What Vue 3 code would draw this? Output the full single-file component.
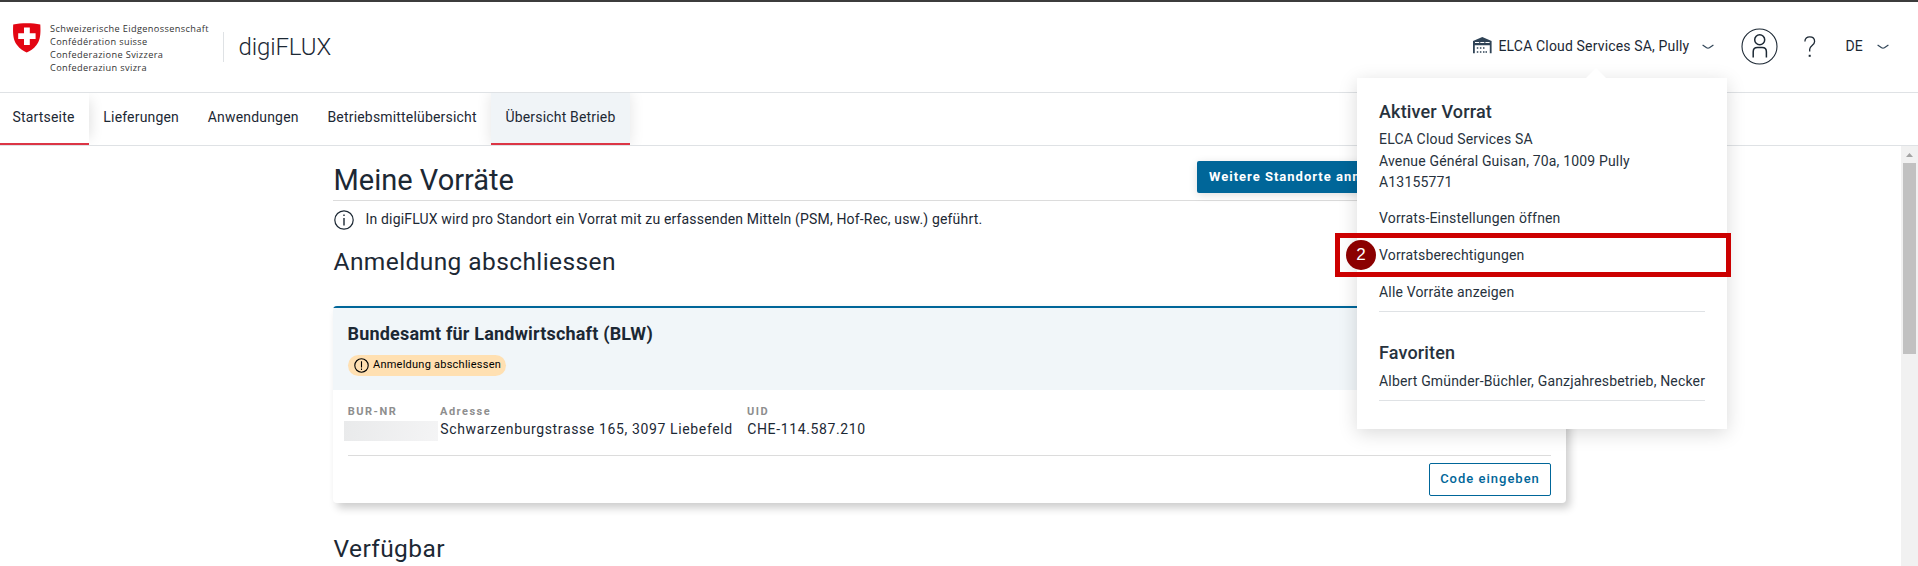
<script setup>
const confederation = [
  'Schweizerische Eidgenossenschaft',
  'Confédération suisse',
  'Confederazione Svizzera',
  'Confederaziun svizra',
]
const tabs = [
  { label: 'Startseite', cls: 'first' },
  { label: 'Lieferungen' },
  { label: 'Anwendungen' },
  { label: 'Betriebsmittelübersicht' },
  { label: 'Übersicht Betrieb', cls: 'current' },
]
</script>

<template>
  <div class="page">
    <header class="header">
      <svg class="shield" width="28" height="30" viewBox="0 0 28 30">
        <path d="M0.2 1.6C8 -0.3 19.500 -0.3 27.300 1.600C27.800 11 27.300 17 23.500 22C20.500 26 17 28 13.700 29.600C10.500 28 7 26 4 22C0.200 17 -0.300 11 0.200 1.600Z" fill="#e30613" />
        <path d="M11 4.500h5.800v5.800h5.800v5.700h-5.800v5.900h-5.800v-5.900h-5.800v-5.700h5.800z" fill="#fff" />
      </svg>
      <div class="conf">
        <div v-for="c in confederation" :key="c">{{ c }}</div>
      </div>
      <div class="brand">digiFLUX</div>
      <div class="account">
        <svg width="19" height="17" viewBox="0 0 19 17">
          <path d="M0 4L9.300 0L18.600 4V16.300H16.800V8.200H1.800V16.300H0Z" fill="#2f4356" />
          <path d="M2 5h4.200v1H2zM7.300 5h4v1h-4zM12.400 5h4.200v1h-4.200z" fill="#fff" />
          <path d="M3.800 10.200h1.500v1.500h-1.500zM6.900 10.200h1.500v1.500h-1.500zM10 10.200h1.500v1.500h-1.500zM3.800 14.200h1.500v1.500h-1.500zM6.900 14.200h1.500v1.500h-1.500zM10 14.200h1.500v1.500h-1.500zM12.500 14.200h1.500v1.500h-1.500z" fill="#2f4356" />
        </svg>
        <span class="acc-name">ELCA Cloud Services SA, Pully</span>
        <svg class="chev" width="12" height="6" viewBox="0 0 12 6"><path d="M0.600 1L4.600 3.700Q6 4.500 7.400 3.700L11.400 1" fill="none" stroke="#2f4356" stroke-width="1.200" /></svg>
      </div>
      <svg class="user" width="37" height="37" viewBox="0 0 37 37" fill="none" stroke="#1c2834">
        <circle cx="18.500" cy="18.500" r="17.500" stroke-width="1.100" />
        <circle cx="18.700" cy="11.700" r="5" stroke-width="1.500" />
        <path d="M12.200 29.500V23.700Q12.200 19.500 16.400 19.500H21.200Q25.400 19.500 25.400 23.700V29.500" stroke-width="1.500" />
      </svg>
      <svg class="help" width="12" height="22" viewBox="0 0 12 22">
        <path d="M0.900 5.500C0.900 2.500 3 0.900 5.700 0.900C8.500 0.900 10.600 2.700 10.600 5.400C10.600 9.300 5.700 9.500 5.700 13.200V15.500" fill="none" stroke="#1c2834" stroke-width="1.300" />
        <rect x="4.700" y="18.800" width="2" height="2" fill="#1c2834" />
      </svg>
      <span class="lang">DE</span>
      <svg class="chev2" width="12" height="6" viewBox="0 0 12 6"><path d="M0.600 1L4.600 3.700Q6 4.500 7.400 3.700L11.400 1" fill="none" stroke="#2f4356" stroke-width="1.200" /></svg>
    </header>

    <nav class="nav">
      <a v-for="t in tabs" :key="t.label" class="tab" :class="t.cls">{{ t.label }}</a>
    </nav>

    <div class="body">
      <main class="content">
        <div class="title-row">
          <h1>Meine Vorräte</h1>
          <button class="primary">Weitere Standorte anmelden</button>
        </div>
        <div class="info">
          <svg width="20" height="20" viewBox="0 0 20 20">
            <circle cx="10" cy="10" r="9.200" fill="none" stroke="#1c2834" stroke-width="1.200" />
            <path d="M10 8V15.500M10 4.500V6" stroke="#1c2834" stroke-width="1.400" />
          </svg>
          <span>In digiFLUX wird pro Standort ein Vorrat mit zu erfassenden Mitteln (PSM, Hof-Rec, usw.) geführt.</span>
        </div>
        <h2>Anmeldung abschliessen</h2>
        <section class="card">
          <div class="card-head">
            <h3>Bundesamt für Landwirtschaft (BLW)</h3>
            <div class="pill">
              <svg width="15" height="15" viewBox="0 0 15 15">
                <circle cx="7.500" cy="7.500" r="6.700" fill="none" stroke="#000" stroke-width="1.100" />
                <path d="M7.500 3.300V9.500M7.500 10.500V12" stroke="#000" stroke-width="1.100" />
              </svg>
              <span>Anmeldung abschliessen</span>
            </div>
          </div>
          <div class="fields">
            <div class="f1"><label>BUR-NR</label><div class="masked"></div></div>
            <div class="f2"><label>Adresse</label><p>Schwarzenburgstrasse 165, 3097 Liebefeld</p></div>
            <div><label>UID</label><p>CHE-114.587.210</p></div>
          </div>
          <div class="actions"><button class="outline">Code eingeben</button></div>
        </section>
        <h2 class="avail">Verfügbar</h2>
      </main>
      <div class="scrollbar">
        <svg width="17" height="17" viewBox="0 0 17 17"><path d="M5 11L8.500 7L12 11Z" fill="#a3a3a3" /></svg>
        <div class="thumb"></div>
      </div>
    </div>

    <aside class="menu">
      <h4>Aktiver Vorrat</h4>
      <address>ELCA Cloud Services SA<br />Avenue Général Guisan, 70a, 1009 Pully<br />A13155771</address>
      <a>Vorrats-Einstellungen öffnen</a>
      <a>Vorratsberechtigungen</a>
      <a>Alle Vorräte anzeigen</a>
      <hr />
      <h4 class="fav">Favoriten</h4>
      <a class="fav-item">Albert Gmünder-Büchler, Ganzjahresbetrieb, Necker</a>
    </aside>
    <div class="marker"><span>2</span></div>
  </div>
</template>

<style>
body { margin: 0; background: #fff; overflow: hidden; }
</style>

<style scoped>
* { box-sizing: border-box; }
.page { position: relative; width: 1918px; height: 566px; overflow: hidden; background: #fff; color: #1c2834; font: 14px/20px Roboto, sans-serif; display: flex; flex-direction: column; }
.header { height: 93px; flex: none; border-top: 2px solid #3c3c3c; border-bottom: 1px solid #dfe2e5; display: flex; align-items: flex-start; padding-left: 13px; }
.shield { margin-top: 21px; }
.conf { margin: 20px 0 0 9px; width: 173px; font: 9.200px/13px "Open Sans", sans-serif; letter-spacing: .37px; color: #333; white-space: nowrap; }
.brand { margin-top: 30px; height: 30px; border-left: 1px solid #dfe2e5; padding-left: 14.500px; font-size: 24px; line-height: 30px; font-weight: 300; letter-spacing: -.12px; }
.account { margin-left: auto; display: flex; }
.account > svg:first-child { margin-top: 35px; }
.acc-name { margin: 34px 0 0 6.500px; width: 203.500px; letter-spacing: .16px; white-space: nowrap; }
.account .chev { margin-top: 42px; }
.user { margin: 26px 0 0 26.500px; }
.help { margin: 34px 0 0 26px; }
.lang { margin: 34px 0 0 30px; width: 31px; }
.chev2 { margin: 42px 29.500px 0 0; }
.nav { height: 53px; flex: none; border-bottom: 1px solid #dfe2e5; display: flex; }
.tab { height: 52px; padding: 0 14.400px; line-height: 49px; white-space: nowrap; letter-spacing: .18px; }
.tab.first { padding-left: 12.500px; border-bottom: 2px solid #dc3545; box-shadow: 8px 0 14px -7px #0002; clip-path: inset(0 -20px 0 0); }
.tab.current { background: #f0f4f7; border-bottom: 2px solid #dc3545; box-shadow: 0 0 14px #0000001c; clip-path: inset(0 -20px 0 -20px); }
.body { flex: 1; min-height: 0; display: flex; justify-content: space-between; }
.content { width: 1233px; margin-left: 333px; }
.title-row { height: 55px; border-bottom: 1px solid #dcdcdc; display: flex; justify-content: space-between; }
h1, h2, h3, h4 { margin: 0; font-weight: 400; white-space: nowrap; }
h1 { font-size: 29px; line-height: 36px; margin-top: 16px; padding-left: .5px; }
button { font: 700 13px/20px Roboto, sans-serif; letter-spacing: 1px; border-radius: 2px; white-space: nowrap; }
.primary { width: 369px; height: 32px; margin-top: 15px; border: 0; background: #006699; color: #fff; padding: 0 12px; text-align: left; box-shadow: 0 2px 8px #0002; }
.info { display: flex; align-items: center; gap: 11.500px; height: 38px; padding-left: 1px; letter-spacing: .17px; white-space: nowrap; }
.info span { margin-top: -2px; }
h2 { font-size: 24.500px; line-height: 30px; margin-top: 8px; padding-left: .5px; letter-spacing: .41px; }
.card { margin-top: 29px; height: 197px; border-top: 2px solid #006699; border-radius: 4px; box-shadow: 4px 5px 8px #0003; background: #fff; }
.card-head { height: 82px; background: #f1f6f9; padding: 15px 14.500px 0; }
h3 { font-size: 18px; line-height: 22px; font-weight: 700; letter-spacing: .19px; }
.pill { margin-top: 10px; width: 158px; height: 21px; border-radius: 11px; background: #ffe0b2; color: #000; display: flex; align-items: center; gap: 4.500px; padding-left: 6px; font-size: 11px; letter-spacing: .24px; white-space: nowrap; }
.pill span { margin-top: -2px; }
.fields { display: flex; height: 66px; margin: 0 15px; padding-top: 14px; border-bottom: 1px solid #dcdcdc; }
.f1 { width: 92.250px; }
.f2 { width: 307px; }
label { display: block; font-size: 11px; line-height: 16px; font-weight: 700; letter-spacing: 1.500px; color: #8e8e8e; margin-left: -.25px; }
p { margin: -1px 0 0; line-height: 20px; letter-spacing: .63px; white-space: nowrap; }
.masked { margin: 1px 0 0 -4px; width: 94px; height: 20px; background: linear-gradient(100deg, #e9eaeb, #f4f4f5); }
.actions { display: flex; justify-content: flex-end; padding: 7px 15px 0; }
.outline { width: 122px; height: 33px; padding: 0 0 1px; background: #fff; color: #006699; border: 1px solid #006699; font-weight: 500; letter-spacing: 1px; }
.avail { margin-top: 31px; }
.scrollbar { width: 17px; background: #f1f1f1; }
.scrollbar svg { display: block; }
.thumb { width: 13px; height: 191px; margin-left: 2px; background: #c1c1c1; }
.menu { position: absolute; left: 1357px; top: 78px; width: 370px; height: 351px; padding: 22px 22px 0; background: #fff; color: #27323d; box-shadow: 0 4px 18px #00000026; white-space: nowrap; }
.menu::before { content: ""; position: absolute; left: 229px; top: -10px; border: 10px solid transparent; border-top: 0; border-bottom-color: #fff; }
h4 { font-size: 18px; line-height: 24px; font-weight: 500; letter-spacing: .16px; }
address { font-style: normal; line-height: 21.700px; margin: 5px 0 6px; letter-spacing: .17px; }
.menu a { display: block; height: 37px; line-height: 37px; letter-spacing: .17px; }
hr { margin: 0; border: 0; border-top: 1px solid #dfe2e5; }
.fav { margin-top: 29px; }
.menu .fav-item { height: 36px; line-height: 32px; border-bottom: 1px solid #dfe2e5; letter-spacing: .17px; }
.marker { position: absolute; left: 1335px; top: 233px; width: 396px; height: 44px; border: 5px solid #c00; padding: 1px 0 0 6px; }
.marker span { display: block; width: 30px; height: 30px; border-radius: 50%; background: #8b0000; color: #fff; font: 17px/29px "Liberation Sans", sans-serif; text-align: center; margin-top: 1px; }
</style>
